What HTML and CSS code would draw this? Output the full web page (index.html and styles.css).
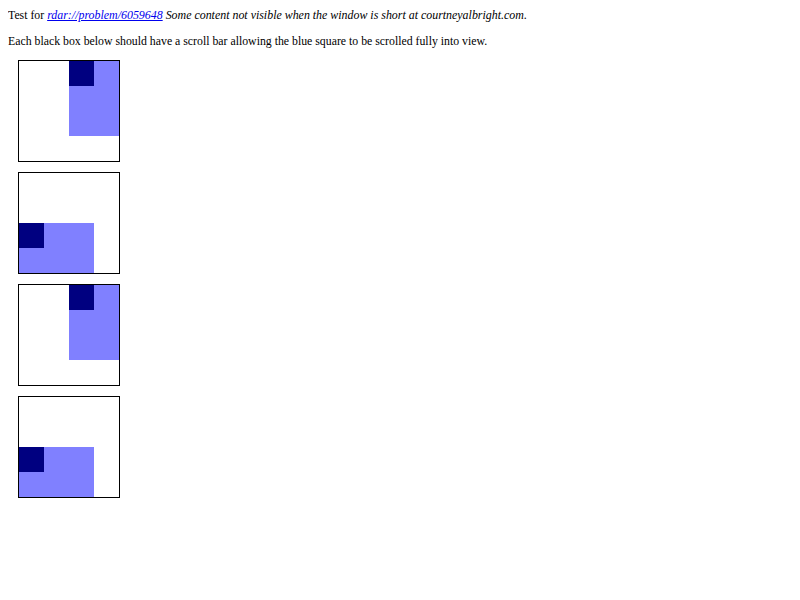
FILE: index.html
```html
<!DOCTYPE html>
<html>
<head>
<meta charset="utf-8">
<link rel="stylesheet" href="styles.css">
</head>
<body>
<p class="intro">Test for <i class="note"><a href="#">rdar://problem/6059648</a> Some content not visible when the window is short at courtneyalbright.com</i>.</p>
<p class="intro">Each black box below should have a scroll bar allowing the blue square to be scrolled fully into view.</p>
<div class="box"><div class="blue right"><div class="dark"></div></div></div>
<div class="box"><div class="blue bottom"><div class="dark"></div></div></div>
<div class="box"><div class="blue right"><div class="dark"></div></div></div>
<div class="box"><div class="blue bottom"><div class="dark"></div></div></div>
</body>
</html>
```
FILE: styles.css
```css
html, body {
  background: #fff;
}
body {
  margin: 8px;
  font-family: "Liberation Serif", "Times New Roman", serif;
  font-size: 11.8px;
  line-height: 15px;
  color: #000;
}
.intro {
  margin: 0 0 11px 0;
}
.note {
  font-size: 11.92px;
}
.intro a {
  color: #0000ee;
  text-decoration: underline;
}
.box {
  width: 100px;
  height: 100px;
  border: 1px solid #000;
  margin: 10px;
  overflow: hidden;
  position: relative;
}
.blue {
  position: absolute;
  width: 75px;
  height: 75px;
  background: #8080ff;
}
.blue.right {
  left: 50px;
  top: 0;
}
.blue.bottom {
  left: 0;
  top: 50px;
}
.dark {
  width: 25px;
  height: 25px;
  background: #000080;
}
```
